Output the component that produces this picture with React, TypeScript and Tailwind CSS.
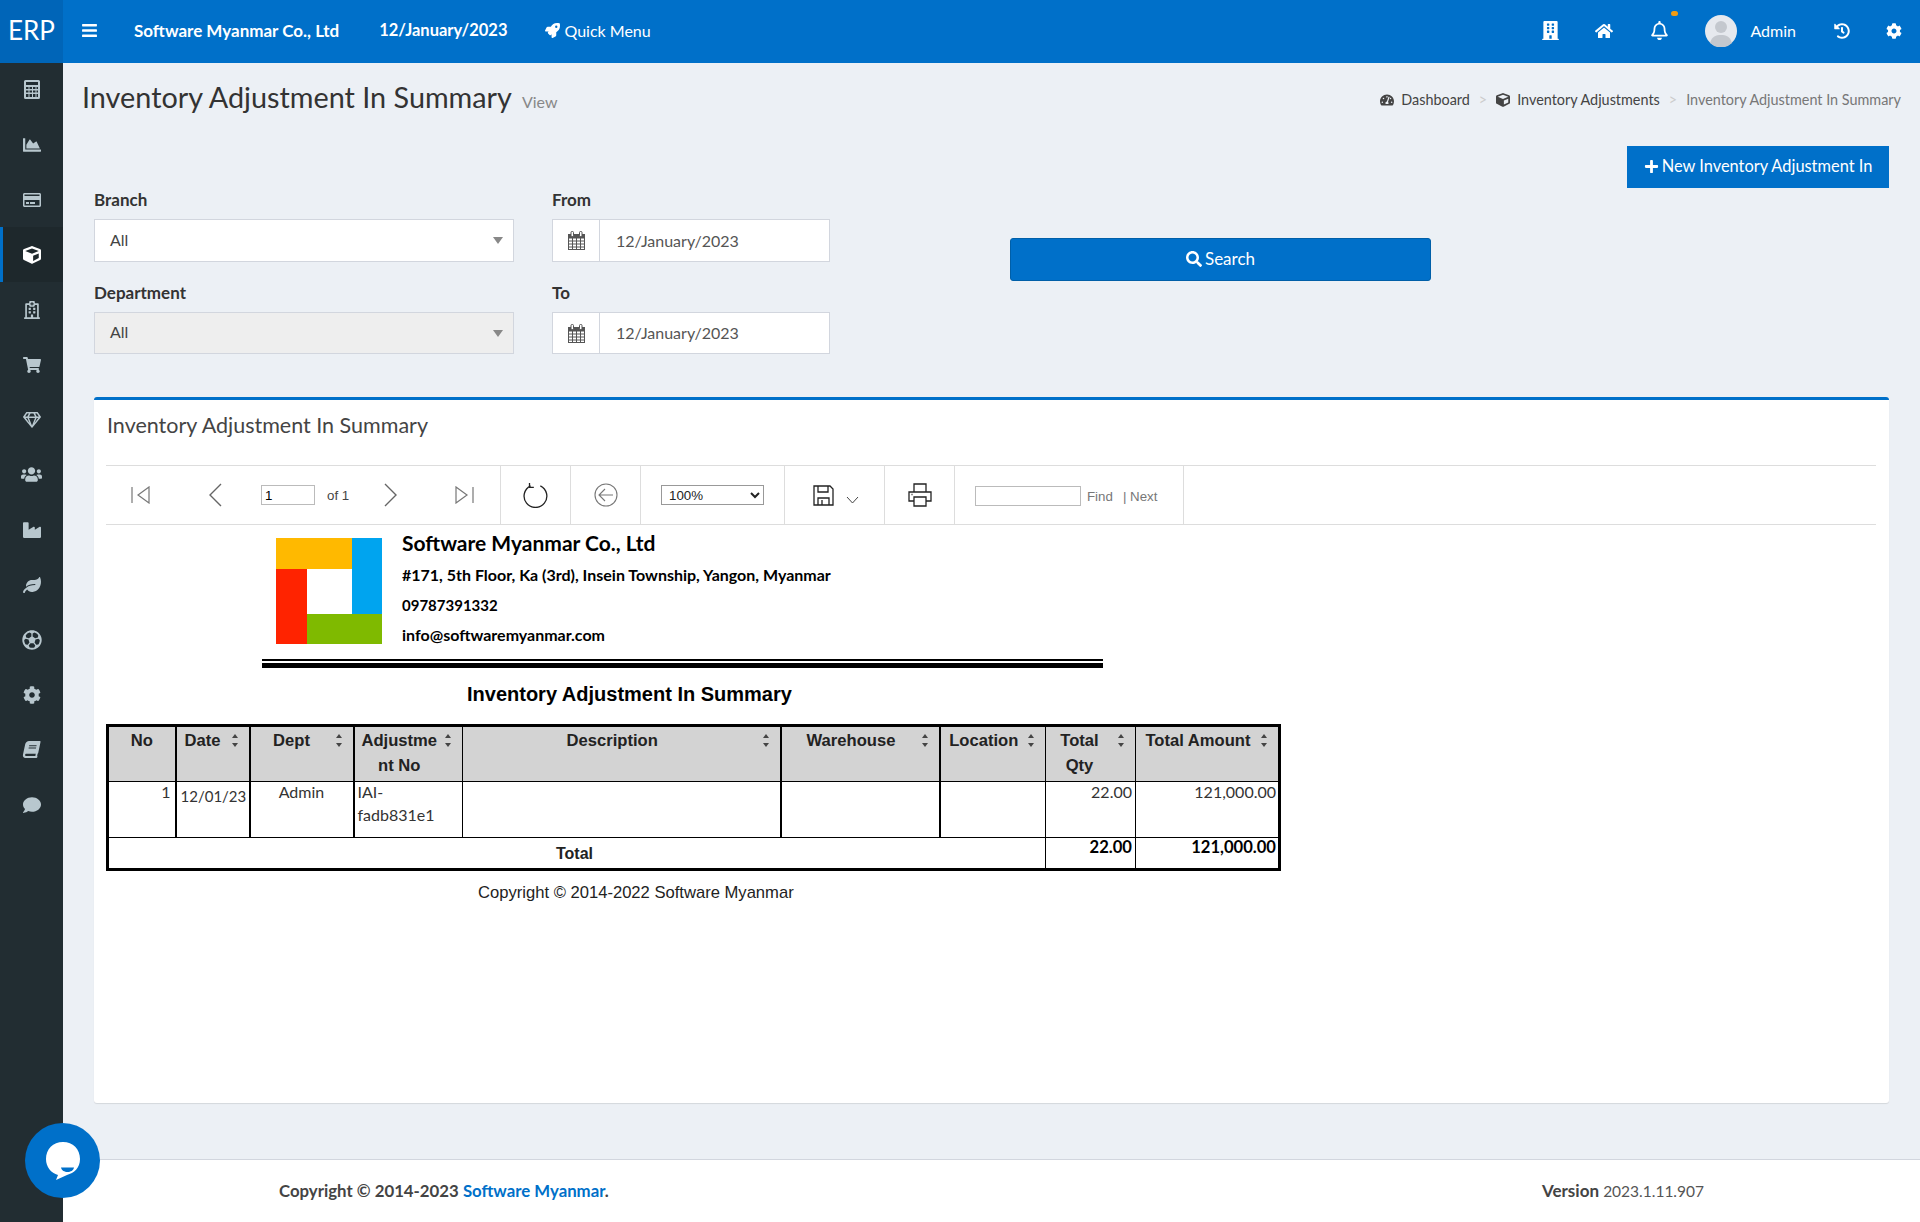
import {
  FaBars,
  FaBook,
  FaBuilding,
  FaChartArea,
  FaCog,
  FaComment,
  FaCube,
  FaHistory,
  FaHome,
  FaIndustry,
  FaLeaf,
  FaPlus,
  FaRegBell,
  FaRegCreditCard,
  FaRegFutbol,
  FaRegGem,
  FaRegHospital,
  FaRocket,
  FaSearch,
  FaShoppingCart,
  FaTachometerAlt,
  FaUsers,
} from "react-icons/fa";

function CalcIcon() {
  return (
    <svg width="16" height="19" viewBox="0 0 16 19" fill="currentColor">
      <path d="M1.500 0h13A1.500 1.500 0 0 1 16 1.500v16a1.500 1.500 0 0 1-1.500 1.500h-13A1.500 1.500 0 0 1 0 17.500v-16A1.500 1.500 0 0 1 1.500 0zM2 2v3h12V2zm0 5v2h2.500V7zm3.500 0v2H8V7zM9 7v2h2.500V7zm3.500 0v2H14V7zM2 10.500v2h2.500v-2zm3.500 0v2H8v-2zm3.500 0v2h2.500v-2zm3.500 0v2H14v-2zM2 14v3h2.500v-3zm3.500 0v3H8v-3zM9 14v3h2.500v-3zm3.500 0v3H14v-3z" fillRule="evenodd" />
    </svg>
  );
}

function TiltedBook() {
  return <FaBook size={17} className="-skew-x-12" />;
}

function UsersIcon() {
  return <FaUsers size={21} />;
}

function BallIcon() {
  return <FaRegFutbol size={20} />;
}

const sideIcons = [
  { icon: CalcIcon },
  { icon: FaChartArea },
  { icon: FaRegCreditCard },
  { icon: FaCube, active: true },
  { icon: FaRegHospital },
  { icon: FaShoppingCart },
  { icon: FaRegGem },
  { icon: UsersIcon },
  { icon: FaIndustry },
  { icon: FaLeaf },
  { icon: BallIcon },
  { icon: FaCog },
  { icon: TiltedBook },
  { icon: FaComment },
];

function CalendarIcon() {
  return (
    <svg width="17" height="19" viewBox="0 0 17 19" fill="none" stroke="#555" strokeWidth="1">
      <rect x="0.5" y="3.5" width="16" height="15" fill="#fff" />
      <rect x="0.5" y="3.5" width="16" height="3.5" fill="#555" />
      <path d="M0.5 10h16M0.5 13h16M0.5 16h16M4.5 7v11M8.5 7v11M12.5 7v11" />
      <rect x="3" y="0.5" width="2.5" height="5" rx="1" fill="#fff" />
      <rect x="11.5" y="0.5" width="2.5" height="5" rx="1" fill="#fff" />
    </svg>
  );
}

function SelectBox({ disabled }: { disabled?: boolean }) {
  return (
    <div
      className={`flex items-center justify-between pl-[15px] pr-[10px] w-[420px] border border-[#d2d6de] text-[16px] text-[#444] ${
        disabled ? "h-[42px] bg-[#eeeeee]" : "h-[43px] bg-white"
      }`}
    >
      <span className="pb-[2px]">All</span>
      <span className="border-x-[5px] border-x-transparent border-t-[7px] border-t-[#888]" />
    </div>
  );
}

function DateBox({ short }: { short?: boolean }) {
  return (
    <div className={`flex w-[278px] border border-[#d2d6de] bg-white ${short ? "h-[42px]" : "h-[43px]"}`}>
      <div className="flex w-[47px] items-center justify-center border-r border-[#d2d6de]">
        <CalendarIcon />
      </div>
      <div className="flex items-center pl-[16px] text-[16px] text-[#555]">12/January/2023</div>
    </div>
  );
}

function Sort() {
  return (
    <svg className="absolute right-[10px] top-[6px]" width="8" height="15" viewBox="0 0 8 15" fill="#444">
      <path d="M4 1 7 5H1zM4 14 1 10h6z" />
    </svg>
  );
}

function ToolbarIcons() {
  return (
    <div className="flex h-full w-[395px] items-center border-r border-[#ddd] pl-[25px] text-[#777]">
      <svg width="19" height="18" viewBox="0 0 19 18" fill="none" stroke="#777" strokeWidth="1.2">
        <path d="M1 1v16M18 1 7 9l11 8z" />
      </svg>
      <svg className="ml-[58px]" width="14" height="24" viewBox="0 0 14 24" fill="none" stroke="#666" strokeWidth="1.4">
        <path d="M13 1 2 12l11 11" />
      </svg>
      <input
        readOnly
        value="1"
        className="ml-[39px] h-[20px] w-[54px] border border-[#bbb] pl-[3px] font-[Liberation_Sans,Arial,sans-serif] text-[13.3px] text-black"
      />
      <span className="ml-[12px] pt-[2px] font-[Liberation_Sans,Arial,sans-serif] text-[13.3px] text-[#444]">of 1</span>
      <svg className="ml-[35px]" width="14" height="24" viewBox="0 0 14 24" fill="none" stroke="#666" strokeWidth="1.4">
        <path d="m1 1 11 11L1 23" />
      </svg>
      <svg className="ml-[57px]" width="19" height="18" viewBox="0 0 19 18" fill="none" stroke="#777" strokeWidth="1.2">
        <path d="M18 1v16M1 1l11 8-11 8z" />
      </svg>
    </div>
  );
}

function ReportTable() {
  const th = "relative border-[#000] bg-[#d3d3d3] pt-[1px] align-top font-bold leading-[25px]";
  const td = "border-[#000] align-top font-[Lato,sans-serif] font-normal leading-[23px] text-[#333]";
  return (
    <table className="w-[1172px] table-fixed border-collapse border-[3px] border-black font-[Liberation_Sans,Arial,sans-serif] text-[16.6px] text-[#222]">
      <colgroup>
        <col className="w-[68px]" />
        <col className="w-[74px]" />
        <col className="w-[104px]" />
        <col className="w-[109px]" />
        <col className="w-[318px]" />
        <col className="w-[159px]" />
        <col className="w-[106px]" />
        <col className="w-[90px]" />
        <col className="w-[144px]" />
      </colgroup>
      <thead>
        <tr className="h-[56px]">
          <th className={`${th} border-r-2`}>No</th>
          <th className={`${th} border-r-2 pr-[20px]`}>Date<Sort /></th>
          <th className={`${th} border-r-2 pr-[20px]`}>Dept<Sort /></th>
          <th className={`${th} border-r pr-[18px]`}>Adjustme<br />nt No<Sort /></th>
          <th className={`${th} border-r-2 pr-[18px]`}>Description<Sort /></th>
          <th className={`${th} border-r-2 pr-[18px]`}>Warehouse<Sort /></th>
          <th className={`${th} border-r pr-[18px]`}>Location<Sort /></th>
          <th className={`${th} border-r pr-[22px]`}>Total<br />Qty<Sort /></th>
          <th className={`${th} pr-[18px]`}>Total Amount<Sort /></th>
        </tr>
      </thead>
      <tbody className="text-[16px]">
        <tr className="h-[56px] border-t border-black">
          <td className={`${td} border-r-2 pr-[4px] text-right`}><div className="-mt-[2px]">1</div></td>
          <td className={`${td} border-r-2 pl-[4px] pt-[3px] text-[15px]`}>12/01/23</td>
          <td className={`${td} border-r-2 text-center`}><div className="-mt-[2px]">Admin</div></td>
          <td className={`${td} border-r pl-[3px]`}><div className="-mt-[2px]">IAI-<br />fadb831e1</div></td>
          <td className={`${td} border-r-2`} />
          <td className={`${td} border-r-2`} />
          <td className={`${td} border-r`} />
          <td className={`${td} border-r pr-[3px] text-right`}><div className="-mt-[2px]">22.00</div></td>
          <td className={`${td} pr-[2px] text-right`}><div className="-mt-[2px]">121,000.00</div></td>
        </tr>
        <tr className="h-[32px] border-t border-black">
          <td colSpan={7} className="border-r border-black pr-[5px] text-center font-bold leading-[25px]">Total</td>
          <td className={`${td} border-r pr-[3px] text-right text-[16.6px] !font-bold !text-black`}><div className="-mt-[2px]">22.00</div></td>
          <td className={`${td} pr-[2px] text-right text-[16.6px] !font-bold !text-black`}><div className="-mt-[2px]">121,000.00</div></td>
        </tr>
      </tbody>
    </table>
  );
}

export default function App() {
  return (
    <div className="relative flex h-[1222px] w-[1920px] overflow-hidden bg-[#ecf0f5] font-[Lato,sans-serif] text-[#333]">
      {/* Sidebar */}
      <aside className="flex w-[63px] shrink-0 flex-col bg-[#222d32]">
        <div className="flex h-[63px] items-center justify-center bg-[#0065b8] pb-[2px] text-[26px] font-normal text-white">ERP</div>
        <div className="-mt-px flex flex-col">
          {sideIcons.map((item, i) => (
            <div
              key={i}
              className={`flex h-[55px] items-center justify-center ${
                item.active ? "bg-[#1e282c] text-white shadow-[inset_3px_0_0_#0070c9]" : "text-[#b8c7ce]"
              }`}
            >
              <item.icon size={18} />
            </div>
          ))}
        </div>
      </aside>

      {/* Main */}
      <div className="flex min-w-0 flex-1 flex-col">
        <header className="flex h-[63px] shrink-0 items-center bg-[#0070c9] pb-[2px] pl-[18px] pr-[18px] text-white">
          <FaBars size={17} />
          <span className="ml-[36px] text-[17px] font-bold">Software Myanmar Co., Ltd</span>
          <span className="ml-[40px] text-[16.500px] font-bold">12/January/2023</span>
          <span className="ml-[38px] flex items-center gap-[4px] text-[16px]">
            <FaRocket size={15} />
            Quick Menu
          </span>
          <div className="ml-auto flex items-center">
            <FaBuilding size={19} />
            <FaHome size={18} className="ml-[35px]" />
            <div className="relative ml-[37px]">
              <FaRegBell size={19} />
              <span className="absolute -right-[9px] -top-[10px] h-[5px] w-[7px] rounded-full bg-[#f39c12]" />
            </div>
            <svg className="ml-[36px]" width="32" height="32" viewBox="0 0 32 32">
              <circle cx="16" cy="16" r="16" fill="#e6e9ee" />
              <circle cx="16" cy="12" r="6" fill="#c4c8ce" />
              <path d="M5 28c2-7 6-8 11-8s9 1 11 8a16 16 0 0 1-22 0z" fill="#c4c8ce" />
            </svg>
            <span className="ml-[13px] text-[16px]">Admin</span>
            <FaHistory size={16} className="ml-[38px]" />
            <FaCog size={16} className="ml-[36px]" />
          </div>
        </header>

        <main className="flex-1 px-[31px]">
          <div className="-mr-[12px] -ml-[12px] flex h-[69px] items-center justify-between">
            <div className="flex items-baseline gap-[10px]">
              <h1 className="text-[28.800px] font-normal text-[#333]">Inventory Adjustment In Summary</h1>
              <small className="text-[16px] text-[#888]">View</small>
            </div>
            <div className="flex items-center pt-[5px] text-[14.400px] text-[#444]">
              <FaTachometerAlt size={14} className="mr-[7px]" />
              Dashboard
              <span className="mx-[9px] text-[#ccc]">&gt;</span>
              <FaCube size={14} className="mr-[7px]" />
              Inventory Adjustments
              <span className="mx-[9px] text-[#ccc]">&gt;</span>
              <span className="text-[#777]">Inventory Adjustment In Summary</span>
            </div>
          </div>

          <div className="mt-[14px] flex justify-end">
            <button className="flex h-[42px] w-[262px] items-center justify-center gap-[3px] bg-[#0070c9] pb-[2px] text-[16.400px] text-white">
              <FaPlus size={15} />
              New Inventory Adjustment In
            </button>
          </div>

          <div className="mt-[2px] flex">
            <div className="flex w-[458px] flex-col">
              <label className="mb-[9px] text-[17px] font-bold leading-[20px]">Branch</label>
              <SelectBox />
              <label className="mb-[9px] mt-[21px] text-[17px] font-bold leading-[20px]">Department</label>
              <SelectBox disabled />
            </div>
            <div className="flex w-[458px] flex-col">
              <label className="mb-[9px] text-[17px] font-bold leading-[20px]">From</label>
              <DateBox />
              <label className="mb-[9px] mt-[21px] text-[17px] font-bold leading-[20px]">To</label>
              <DateBox short />
            </div>
            <button className="mt-[48px] flex h-[43px] w-[421px] items-center justify-center gap-[3px] rounded-[3px] border border-[#005fa8] bg-[#0070c9] pb-[2px] text-[17px] text-white">
              <FaSearch size={16} />
              Search
            </button>
          </div>

          {/* Report card */}
          <section className="mt-[43px] h-[706px] rounded-[3px] border-t-[3px] border-[#0070c9] bg-white px-[12px] shadow-[0_1px_1px_rgba(0,0,0,0.1)]">
            <h2 className="flex h-[65px] items-center pb-[14px] pl-px text-[21.500px] font-normal text-[#444]">Inventory Adjustment In Summary</h2>

            <div className="flex h-[60px] w-[1770px] items-center border-y border-[#ddd]">
              <ToolbarIcons />
              <div className="flex h-full w-[70px] items-center justify-center border-r border-[#ddd]">
                <svg width="26" height="26" viewBox="0 0 24 24" fill="none" stroke="#222" strokeWidth="1.200">
                  <path d="M16 3.500a10.500 10.500 0 1 1-9 0" />
                  <path d="M6 1v4h4" />
                </svg>
              </div>
              <div className="flex h-full w-[70px] items-center justify-center border-r border-[#ddd]">
                <svg width="24" height="24" viewBox="0 0 24 24" fill="none" stroke="#777" strokeWidth="1.100">
                  <circle cx="12" cy="12" r="11" />
                  <path d="M19 12H5M11 6l-6 6 6 6" />
                </svg>
              </div>
              <div className="flex h-full w-[144px] items-center justify-center border-r border-[#ddd]">
                <select className="h-[20px] w-[103px] border border-[#999] bg-white pl-[3px] font-[Liberation_Sans,Arial,sans-serif] text-[13.300px] text-[#222]" defaultValue="100%">
                  <option>100%</option>
                </select>
              </div>
              <div className="flex h-full w-[100px] items-center border-r border-[#ddd] pl-[28px]">
                <svg width="21" height="21" viewBox="0 0 21 21" fill="none" stroke="#222" strokeWidth="1.300">
                  <path d="M1 1h16l3 3v16H1zM5 1v6h10V1M5 20v-7h11v7M9 15v5" />
                </svg>
                <svg className="ml-[12px] mt-[9px]" width="13" height="8" viewBox="0 0 13 8" fill="none" stroke="#444">
                  <path d="m1 1 5.500 6L12 1" />
                </svg>
              </div>
              <div className="flex h-full w-[70px] items-center justify-center border-r border-[#ddd]">
                <svg width="24" height="24" viewBox="0 0 24 24" fill="none" stroke="#222" strokeWidth="1.300">
                  <path d="M6 9V1h12v8M6 18H1V9h22v9h-5M6 14h12v9H6z" />
                  <path d="M3.500 11.500h1" />
                </svg>
              </div>
              <div className="flex h-full w-[229px] items-center border-r border-[#ddd] pl-[20px] font-[Liberation_Sans,Arial,sans-serif] text-[13.300px] text-[#777]">
                <input readOnly className="mt-[2px] h-[20px] w-[106px] border border-[#bbb]" />
                <span className="ml-[6px] pt-[4px]">Find</span>
                <span className="ml-[10px] pt-[4px]">| Next</span>
              </div>
            </div>

            {/* Report page */}
            <div className="ml-[170px] mt-[13px] flex">
              <svg width="106" height="106" viewBox="0 0 106 106">
                <rect x="0" y="0" width="76" height="31" fill="#ffb900" />
                <rect x="76" y="0" width="30" height="76" fill="#00a4ef" />
                <rect x="0" y="31" width="31" height="75" fill="#ff2300" />
                <rect x="31" y="76" width="75" height="30" fill="#7fba00" />
              </svg>
              <div className="-mt-[7px] ml-[20px] flex flex-col font-bold text-black">
                <span className="text-[21px] leading-[24px]">Software Myanmar Co., Ltd</span>
                <span className="mt-[10px] text-[16px] leading-[20px]">#171, 5th Floor, Ka (3rd), Insein Township, Yangon, Myanmar</span>
                <span className="mt-[10px] text-[15px] leading-[20px]">09787391332</span>
                <span className="mt-[10px] text-[16px] leading-[20px]">info@softwaremyanmar.com</span>
              </div>
            </div>
            <div className="ml-[156px] mt-[14px] h-[9px] w-[841px] border-b-[5px] border-t-[2px] border-black" />
            <div className="ml-[361px] mt-[13px] font-[Liberation_Sans,Arial,sans-serif] text-[20px] font-bold leading-[26px] text-black">
              Inventory Adjustment In Summary
            </div>
            <div className="mt-[17px]">
              <ReportTable />
            </div>
            <div className="ml-[372px] mt-[11px] font-[Liberation_Sans,Arial,sans-serif] text-[16.600px] leading-[22px] text-[#222]">
              Copyright © 2014-2022 Software Myanmar
            </div>
          </section>
        </main>

        <footer className="flex h-[63px] shrink-0 items-center justify-between border-t border-[#d2d6de] bg-white pl-[216px] pr-[216px] text-[16px]">
          <div className="text-[16.800px] font-bold text-[#444]">
            Copyright © 2014-2023 <span className="text-[#0070c9]">Software Myanmar</span>.
          </div>
          <div>
            <span className="text-[17px] font-bold text-[#444]">Version</span> <span className="text-[15.500px] text-[#555]">2023.1.11.907</span>
          </div>
        </footer>
      </div>

      {/* Chat launcher */}
      <div className="absolute left-[25px] top-[1123px] flex h-[75px] w-[75px] items-center justify-center rounded-full bg-[#0070c9]">
        <svg width="36" height="40" viewBox="0 0 36 40">
          <path d="M18 1c10 0 17 7 17 17 0 9-6 14-13 16l-11 5 2-5C6 32 1 26 1 18 1 8 8 1 18 1z" fill="#fff" />
          <path d="M16 26.500h13c-1 6-12 6-13 0z" fill="#0070c9" />
        </svg>
      </div>
    </div>
  );
}
